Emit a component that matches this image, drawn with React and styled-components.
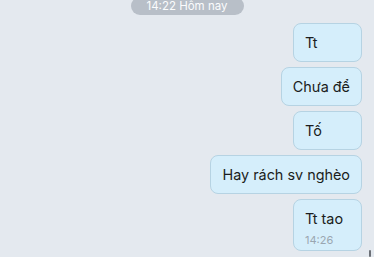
import React from 'react';
import styled, { createGlobalStyle } from 'styled-components';

const Global = createGlobalStyle`
  html, body {
    margin: 0;
    padding: 0;
    background: #e4e9ef;
    overflow: hidden;
  }
  body {
    font-family: Inter, "Noto Sans", sans-serif;
    -webkit-font-smoothing: antialiased;
  }
`;

const Screen = styled.div`
  width: 374px;
  height: 257px;
  position: relative;
  overflow: hidden;
  background: #e4e9ef;
`;

const Thread = styled.div`
  display: flex;
  flex-direction: column;
  align-items: flex-end;
  gap: 5px;
  padding: 0 12px 0 0;
  margin-top: -3px;
`;

const DatePill = styled.div`
  align-self: center;
  width: 113px;
  height: 18px;
  margin-left: 12px;
  margin-bottom: 3px;
  border-radius: 9px;
  background: #b8bfc8;
  color: #fbfcfd;
  font-size: 11.5px;
  line-height: 18px;
  text-align: center;
`;

const Bubble = styled.div`
  box-sizing: border-box;
  min-width: 69px;
  padding: ${p => (p.$time ? '9px 11px 3px' : '9px 11px 8px')};
  border: 1px solid #b6d3e3;
  border-radius: 8px;
  background: #d5eefb;
  color: #1b1d20;
  font-size: 14.4px;
  line-height: 20px;
  white-space: nowrap;
`;

const Time = styled.div`
  margin-top: 4px;
  font-size: 11px;
  line-height: 14px;
  color: #9aa6b1;
`;

const Scrollbar = styled.div`
  position: absolute;
  right: 3px;
  bottom: 0;
  width: 2px;
  height: 7px;
  border-radius: 1px;
  background: #6c7077;
`;

const messages = ['Tt', 'Chưa để', 'Tố', 'Hay rách sv nghèo'];

export default function App() {
  return (
    <Screen>
      <Global />
      <Thread>
        <DatePill>14:22 Hôm nay</DatePill>
        {messages.map((m, i) => (
          <Bubble key={i}>{m}</Bubble>
        ))}
        <Bubble $time>
          Tt tao
          <Time>14:26</Time>
        </Bubble>
      </Thread>
      <Scrollbar />
    </Screen>
  );
}
